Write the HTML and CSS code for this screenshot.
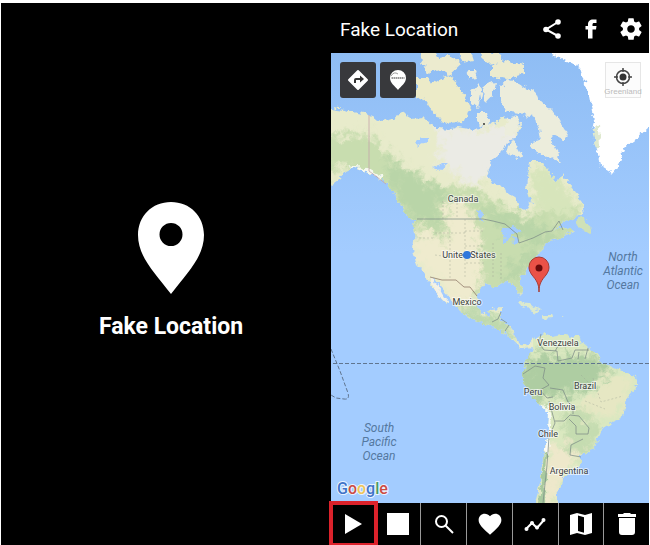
FILE: index.html
```html
<!DOCTYPE html>
<html lang="en">
<head>
  <meta charset="UTF-8">
  <meta name="viewport" content="width=device-width, initial-scale=1.0">
  <title>Fake Location</title>
  <link rel="stylesheet" href="styles.css">
</head>
<body>
  <div class="screens">
    <section class="splash">
      <svg class="splash-pin" viewBox="0 0 66 92" aria-hidden="true">
        <path fill="#fff" fill-rule="evenodd" d="M33 0C14 0 0 14 0 33c0 22 17 38 33 59 16-21 33-37 33-59C66 14 52 0 33 0zm0 21a11.500 11.500 0 1 1 0 23 11.500 11.500 0 0 1 0-23z"/>
      </svg>
      <p class="splash-title">Fake Location</p>
    </section>

    <main class="phone">
      <header class="topbar">
        <h1>Fake Location</h1>
        <button type="button" aria-label="Share">
          <svg width="24" height="24" viewBox="0 0 24 24"><path d="M18 5L6 12.500 18 19" fill="none" stroke="#fff" stroke-width="2"/><circle cx="18" cy="5" r="2.800"/><circle cx="6" cy="12.500" r="2.800"/><circle cx="18" cy="19" r="2.800"/></svg>
        </button>
        <button type="button" aria-label="Facebook">
          <svg width="24" height="24" viewBox="0 0 24 24"><path d="M9 21.500V12.500H6.500V9H9V7.500C9 4 11 2.500 14 2.500h3.500V6h-2.300c-1.300 0-1.700.6-1.700 1.700V9h4l-.5 3.500h-3.500v9z"/></svg>
        </button>
        <button type="button" aria-label="Settings">
          <svg width="26" height="26" viewBox="0 0 24 24"><path d="M19.430 12.980c.04-.32.070-.64.070-.98s-.03-.66-.07-.98l2.110-1.650c.19-.15.240-.42.120-.64l-2-3.460c-.12-.22-.39-.3-.61-.22l-2.490 1c-.52-.4-1.080-.73-1.690-.98l-.38-2.650C14.460 2.180 14.250 2 14 2h-4c-.25 0-.46.180-.49.420l-.38 2.650c-.61.250-1.170.590-1.690.98l-2.490-1c-.23-.09-.49 0-.61.220l-2 3.460c-.13.220-.07.490.120.640l2.110 1.650c-.04.320-.07.650-.07.980s.03.660.070.980l-2.110 1.650c-.19.150-.24.420-.12.640l2 3.460c.12.220.390.300.610.220l2.490-1c.52.400 1.080.730 1.690.980l.38 2.650c.03.240.240.420.490.420h4c.25 0 .46-.18.490-.42l.38-2.650c.61-.25 1.170-.59 1.690-.98l2.490 1c.23.090.490 0 .61-.22l2-3.460c.12-.22.070-.49-.12-.64l-2.110-1.650zM12 15.500c-1.930 0-3.500-1.570-3.500-3.500s1.570-3.500 3.500-3.500 3.500 1.570 3.500 3.500-1.570 3.500-3.500 3.500z"/></svg>
        </button>
      </header>

      <div class="map">
        <svg class="map-canvas" viewBox="0 0 318 450" preserveAspectRatio="xMidYMid slice" role="img" aria-label="Map of the Americas">
          <defs>
            <filter id="coast" x="-5%" y="-5%" width="110%" height="110%">
              <feTurbulence type="fractalNoise" baseFrequency="0.16" numOctaves="3" seed="4" result="noise"/>
              <feDisplacementMap in="SourceGraphic" in2="noise" scale="8" xChannelSelector="R" yChannelSelector="G"/>
            </filter>
            <filter id="terrain" x="-10%" y="-10%" width="120%" height="120%">
              <feGaussianBlur stdDeviation="3" result="soft"/>
              <feTurbulence type="fractalNoise" baseFrequency="0.12" numOctaves="3" seed="9" result="noise"/>
              <feDisplacementMap in="soft" in2="noise" scale="26" xChannelSelector="R" yChannelSelector="G"/>
            </filter>
            <linearGradient id="sea" gradientUnits="userSpaceOnUse" x1="0" y1="0" x2="0" y2="200">
              <stop offset="0" stop-color="#8fbdf4"/>
              <stop offset="1" stop-color="#a3ccff"/>
            </linearGradient>
            <path id="north" d="M-8 54L14 57 37 62 51 68 62 65 72 59 82 65 94 64 104 75 121 76 127 74 141 77 152 76 160 67 164 72 172 62 178 68 187 64 189 75 184 86 177 87 172 99 160 108 156 120 161 130 174 137 184 144 189 156 195 158 200 148 196 136 197 126 199 109 211 109 219 119 226 129 232 120 239 134 251 147 254 160 244 165 231 169 223 177 235 174 242 179 228 185 215 190 209 199 204 207 197 217 187 227 193 240 189 244 184 232 174 229 164 234 154 230 149 236 145 246 149 259 158 263 161 256 170 255 170 269 178 272 184 280 187 290 197 292 202 286 204 294 190 295 174 280 162 274 151 269 137 264 128 257 121 247 111 235 104 227 100 225 106 235 117 249 115 251 104 238 94 222 86 212 82 197 84 180 82 167 74 160 66 146 57 131 47 124 36 119 24 114 14 119 7 127-8 138z"/>
            <path id="south" d="M202 287L214 280 221 284 233 282 244 283 257 294 267 301 271 309 281 314 294 320 306 325 306 334 296 345 292 364 274 372 269 384 259 400 249 404 249 412 231 425 232 430 225 437 228 455 203 455 209 430 212 404 217 380 218 360 204 347 192 330 191 317 197 304 202 294z"/>
            <clipPath id="land">
              <use href="#north"/>
              <use href="#south"/>
            </clipPath>
          </defs>

          <rect x="-400" y="-400" width="1200" height="1300" fill="url(#sea)"/>

          <!-- mainland with terrain tint -->
          <g filter="url(#coast)">
            <use href="#north" fill="#e8ebcb"/>
            <use href="#south" fill="#dae8c0"/>
            <g clip-path="url(#land)">
              <g filter="url(#terrain)">
                <path fill="#ebebe5" d="M105 75h85v65l-30-20-20 12-32-25z"/>
                <path fill="#c8ddaf" d="M-10 85l45-5 40 35 35 18 40 5 40 25 55-10 10 25-40 20-25 45-60 5 5-60-60-5-10-20-20-35-30-15-40 15z"/>
                <path fill="#b9d5a8" d="M55 105l25 15 38 20-12 15 8 30-14-18-20 0-20-35zM140 145l20 10 55 20 15 0-20 18-40-15zM188 205l15-12 5 10-20 25-20 3z"/>
                <path fill="#efebce" d="M112 148l25 0 12 35 2 55-12 8 10 16-22-8-22-32-18-12-3-30 12-8 8 12 15 2z"/>
                <path fill="#d7e5bb" d="M200 115h20l30 40-22 8-25-10z"/>
                <path fill="#bfd9ae" d="M120 250l25 5 30 10 15 30-30-15-30-12z"/>
                <path fill="#aecda2" d="M190 305l22-5 60 6 8 16-34 20-22-1-16 12-18-17z"/>
                <path fill="#e6e7c3" d="M278 322l25 0-12 38-22 5-24-10 20-15z"/>
                <path fill="#c5dcb0" d="M232 355l22 4 16 15-18 34-20-20z"/>
                <path fill="#eee8cb" d="M216 392l22 0 12 12-20 22-3 26h-16z"/>
              </g>
              <path fill="#fff" opacity=".8" d="M16 112l16 2 20 11-3 3-17-7zM217 355l4 8-3 38-4 0 2-26-10-25z"/>
              <path fill="#a8c99f" d="M208 450l5-50 3 0-2 50z"/>
            </g>

            <!-- Baja California and lakes -->
            <path fill="#f4f1e5" d="M99 224l5 4 8 14 6 8-4-1-10-11z"/>
            <path fill="#a3ccff" d="M84 90l5-5 8 0-2 5-8 4zM102 116l10-6 4 0-9 8zM146 155l4 2 3 12-4-2zM169 178l12-5 8 5-8 3-5 9-3 0 1-9zM182 184l6 1-1 6-6 1z"/>
          </g>

          <!-- Arctic islands, Newfoundland and the Caribbean -->
          <g filter="url(#coast)" fill="#eceddc">
            <path d="M85 25l12 0 5 10-11 14-6-4zM94 47l2-13 11-7 14-5 6 12 5 7 7 12-5 16-23 1-8-10z" fill="#ecebc8"/>
            <path d="M88-4l12 0 6 8 14-2 10 9-12 11-9-6-13 4-5-12zM124-5l14 0 4 12-10 2zM148-2l20 3 6 8-18 2zM160 13l15-6 18 5 0 9-16 5-17-2z" fill="#ecebcf"/>
            <path d="M136 17l8 0 3 8-8 1zM140 39l7-8 4 5-4 19-7-6zM153 32l11-3-2 13-7 8-4-7zM145 59l11 0 2 14-8 2-5-8z"/>
            <path d="M169 34l8-7 12 3 15 10 7 10 10 7 16 25-5 5-11-5 8 27-15-6-15-8 1-6 10-2-2-12-7-12-12-3-15-2-5-11z"/>
            <path d="M176 65l9-3 4 10-8 12-8-1zM177 92l5-5 9 17-5 1-11-5z"/>
            <path d="M246 173l4-10 4 0 1 7 7 6-4 4z" fill="#cfe1b8"/>
            <path d="M188 249l9 1 13 8-3 2-16-7zM211 262l8 0 3 4-9 1zM231 263l3 1-3 1z" fill="#dce9cd"/>
          </g>

          <path filter="url(#coast)" fill="#fff" d="M221-8L222 1 234 7 249 14 254 30 258 42 261 58 264 68 262 77 266 97 269 112 282 120 287 114 294 94 305 86 318 74 800 40V-400H221z"/>
          <path filter="url(#coast)" fill="#dfe9cf" d="M261 76l7-4 1 22-4 4z"/>

          <!-- borders -->
          <g fill="none" stroke="#7d8c87" stroke-width="1" opacity=".75">
            <path stroke="#c3a0a8" d="M38 62v56l8 6 9 7"/>
            <path d="M86 166h66l10 2 12 3 12 10 2 9 14-5 12-6 7-1 7-10 4 9"/>
            <path stroke="#8b7464" d="M99 224l12 3 14 0 8 7 6 0 7 9"/>
            <path d="M161 269l6-3 3-7M170 266l6 4M178 272l-4 6M210 281l-2 9 5 7 13 1 1 10 14-3 3-8 14 0M192 321l12-8 10 2-2 10 6 7-9 5 7 8 6-1M219 335l13 2 5 12 5 4 0 8M218 348l6 22-6 14-2 28-4 38M224 368l9 0 6-6 9 1 10 12-1 6-12 0 0-8-7-7M252 386l-12 6-1 10 11 2M224 298l5-8M257 295l-3 11M248 299l-1 7"/>
          </g>
          <g fill="none" stroke="#9aa294" stroke-dasharray="2 2" opacity=".4">
            <path d="M112 148v18M126 150v16M104 180h30M119 183v43M134 166v60M134 193h20M104 202l15 2M134 178h18M135 210h20M88 185h16M162 190v35M170 200v26M262 325l8 24 22-6M254 348l20 8M250 322l14 14"/>
          </g>
          <path class="dashed" d="M-400 310.500H800"/>
          <path class="dashed" d="M0 296l9 22 8 22q2 7-4 6l-8-1-5-3"/>
          <circle cx="153" cy="71" r="1" fill="#333"/>

          <g class="countries">
            <text x="132" y="149">Canada</text>
            <text x="138" y="205">United States</text>
            <text x="136" y="252">Mexico</text>
            <text x="227" y="293">Venezuela</text>
            <text x="254" y="336">Brazil</text>
            <text x="202" y="342">Peru</text>
            <text x="231" y="357">Bolivia</text>
            <text x="217" y="384">Chile</text>
            <text x="238" y="421">Argentina</text>
          </g>
          <g class="oceans">
            <text x="292" y="208">North</text>
            <text x="292" y="222">Atlantic</text>
            <text x="292" y="236">Ocean</text>
            <text x="48" y="379">South</text>
            <text x="48" y="393">Pacific</text>
            <text x="48" y="407">Ocean</text>
          </g>

          <circle cx="136" cy="202" r="4" fill="#2f78dc"/>
          <path fill="#ea5247" stroke="#a83a33" d="M208 239c0-9-3-12-7-17-2-3-3-5-3-8a10 10 0 0 1 20 0c0 3-1 5-3 8-4 5-7 8-7 17z"/>
          <circle cx="208" cy="215" r="3.500" fill="#6a0b0b"/>

          <text class="google" x="6" y="441"><tspan fill="#3f73c8">G</tspan><tspan fill="#cc4b45">o</tspan><tspan fill="#efc65a">o</tspan><tspan fill="#3f73c8">g</tspan><tspan fill="#4a9a62">l</tspan><tspan fill="#cc4b45">e</tspan></text>
        </svg>

        <div class="map-tools">
          <button type="button" class="tool-dark" aria-label="Directions">
            <svg width="22" height="22" viewBox="0 0 22 22"><path fill="#fff" stroke="#fff" stroke-width="2" stroke-linejoin="round" d="M11 2l9 9-9 9-9-9z"/><path fill="#333" d="M7 14v-3q0-2 2-2h4V6.500l4 3.500-4 3.500V11H9v3z"/></svg>
          </button>
          <button type="button" class="tool-dark" aria-label="Go to coordinates">
            <svg width="18" height="22" viewBox="0 0 18 22"><path fill="#fff" d="M9 1a8 8 0 0 0-8 8c0 5 5 8 8 12 3-4 8-7 8-12a8 8 0 0 0-8-8z"/><path d="M2 7q3-5 7-2M2 9h14" fill="none" stroke="#999"/><path d="M3 9h12" stroke="#666" stroke-dasharray="1 1"/></svg>
          </button>
          <button type="button" class="tool-light" aria-label="My location">
            <svg width="20" height="20" viewBox="0 0 20 20"><circle cx="10" cy="10" r="6.500" fill="none" stroke="#444" stroke-width="1.500"/><circle cx="10" cy="10" r="3.500" fill="#333"/><path d="M10 1v4M10 15v4M1 10h4M15 10h4" stroke="#444" stroke-width="1.500"/></svg>
            <span>Greenland</span>
          </button>
        </div>
      </div>

      <nav class="toolbar">
        <button type="button" class="active" aria-label="Play">
          <svg width="24" height="24" viewBox="0 0 24 24"><path d="M4 2l17 10L4 22z"/></svg>
        </button>
        <button type="button" aria-label="Stop">
          <svg width="24" height="24" viewBox="0 0 24 24"><path d="M1 1h22v22H1z"/></svg>
        </button>
        <button type="button" aria-label="Search">
          <svg width="24" height="24" viewBox="0 0 24 24"><g fill="none" stroke="#fff" stroke-width="2"><circle cx="9.500" cy="9.500" r="5.500"/><path d="M13.500 13.500l7.500 7.500"/></g></svg>
        </button>
        <button type="button" aria-label="Favorites">
          <svg width="26" height="26" viewBox="0 0 24 24"><path d="M12 22l-1.500-1.400C5.400 15.900 1.500 12.500 1.500 8.300 1.500 5 4 2.500 7.200 2.500c1.800 0 3.600.9 4.800 2.300 1.200-1.400 3-2.300 4.800-2.300 3.200 0 5.700 2.500 5.700 5.800 0 4.200-3.900 7.600-9 12.300z"/></svg>
        </button>
        <button type="button" aria-label="Route">
          <svg width="24" height="24" viewBox="0 0 24 24"><path d="M3 17l6-6 5 5 7-8" fill="none" stroke="#fff" stroke-width="2"/><circle cx="3.500" cy="17" r="2"/><circle cx="9" cy="11" r="2"/><circle cx="14" cy="15.500" r="2"/><circle cx="20.500" cy="8" r="2"/></svg>
        </button>
        <button type="button" aria-label="Map type">
          <svg width="24" height="24" viewBox="0 0 24 24"><path fill-rule="evenodd" d="M1 3l7-2 8 2 7-2v20l-7 2-8-2-7 2zM9 3.500v15.500l6 1.800V5.200z"/></svg>
        </button>
        <button type="button" aria-label="Delete">
          <svg width="24" height="24" viewBox="0 0 24 24"><path d="M3 2h5l1-1h6l1 1h5v3H3zM4 6h16v14q0 3-3 3H7q-3 0-3-3z"/></svg>
        </button>
      </nav>
    </main>
  </div>
</body>
</html>
```

FILE: styles.css
```css
* {
  box-sizing: border-box;
}

body {
  margin: 0;
  font-family: Roboto, "Liberation Sans", sans-serif;
  background: #fff;
  color: #fff;
}

h1, p {
  margin: 0;
}

button {
  display: flex;
  justify-content: center;
  align-items: center;
  padding: 0;
  border: none;
  background: none;
  cursor: pointer;
}

button svg {
  display: block;
  flex: none;
  fill: #fff;
}

.screens {
  display: grid;
  grid-template-columns: 330fr 318fr;
  height: 100vh;
  padding: 3px 1px 0;
  overflow: hidden;
}

.splash {
  display: flex;
  flex-direction: column;
  justify-content: center;
  align-items: center;
  gap: 19px;
  padding: 0 0 5px 10px;
  background: #000;
}

.splash-pin {
  width: 66px;
}

.splash-title {
  font-size: 23px;
  line-height: 28px;
  font-weight: bold;
}

.phone {
  min-width: 0;
  min-height: 0;
  display: flex;
  flex-direction: column;
  background: #000;
}

.topbar {
  display: flex;
  align-items: center;
  gap: 15px;
  height: 50px;
  padding: 2px 5px 0 9px;
}

.topbar h1 {
  flex: 1;
  font-size: 19px;
  font-weight: normal;
}

.map {
  position: relative;
  flex: 1;
  min-height: 0;
}

.map-canvas {
  display: block;
  width: 100%;
  height: 100%;
}

/* buttons floating over the map */
.map-tools {
  position: absolute;
  top: 9px;
  left: 9px;
  right: 8px;
  display: flex;
  gap: 4px;
}

.tool-dark {
  width: 36px;
  height: 36px;
  border-radius: 3px;
  background: #38393c;
}

.tool-light {
  flex-direction: column;
  width: 36px;
  height: 36px;
  margin-left: auto;
  padding-top: 4px;
  border: 1px solid #e6e6e6;
  background: #fcfcfc;
}

.tool-light span {
  font-size: 8px;
  line-height: 10px;
  color: #bbb;
}

.dashed {
  fill: none;
  stroke: #60758f;
  stroke-dasharray: 4 2;
}

.countries {
  font-size: 9px;
  text-anchor: middle;
  fill: #3c4340;
  stroke: rgba(255, 255, 255, 0.6);
  stroke-width: 2px;
  paint-order: stroke;
}

.oceans {
  font-size: 12px;
  font-style: italic;
  text-anchor: middle;
  fill: #5478a0;
}

.google {
  font-size: 16px;
  font-weight: 500;
  stroke: rgba(255, 255, 255, 0.8);
  stroke-width: 2px;
  paint-order: stroke;
}

.toolbar {
  display: flex;
  height: 42px;
}

.toolbar button {
  flex: 1;
  border-left: 1px solid #999;
}

.toolbar button:first-child,
.toolbar button:nth-child(2) {
  border-left: none;
}

.toolbar .active {
  z-index: 1;
  outline: 4px solid #dc222b;
  outline-offset: -2px;
}
```
